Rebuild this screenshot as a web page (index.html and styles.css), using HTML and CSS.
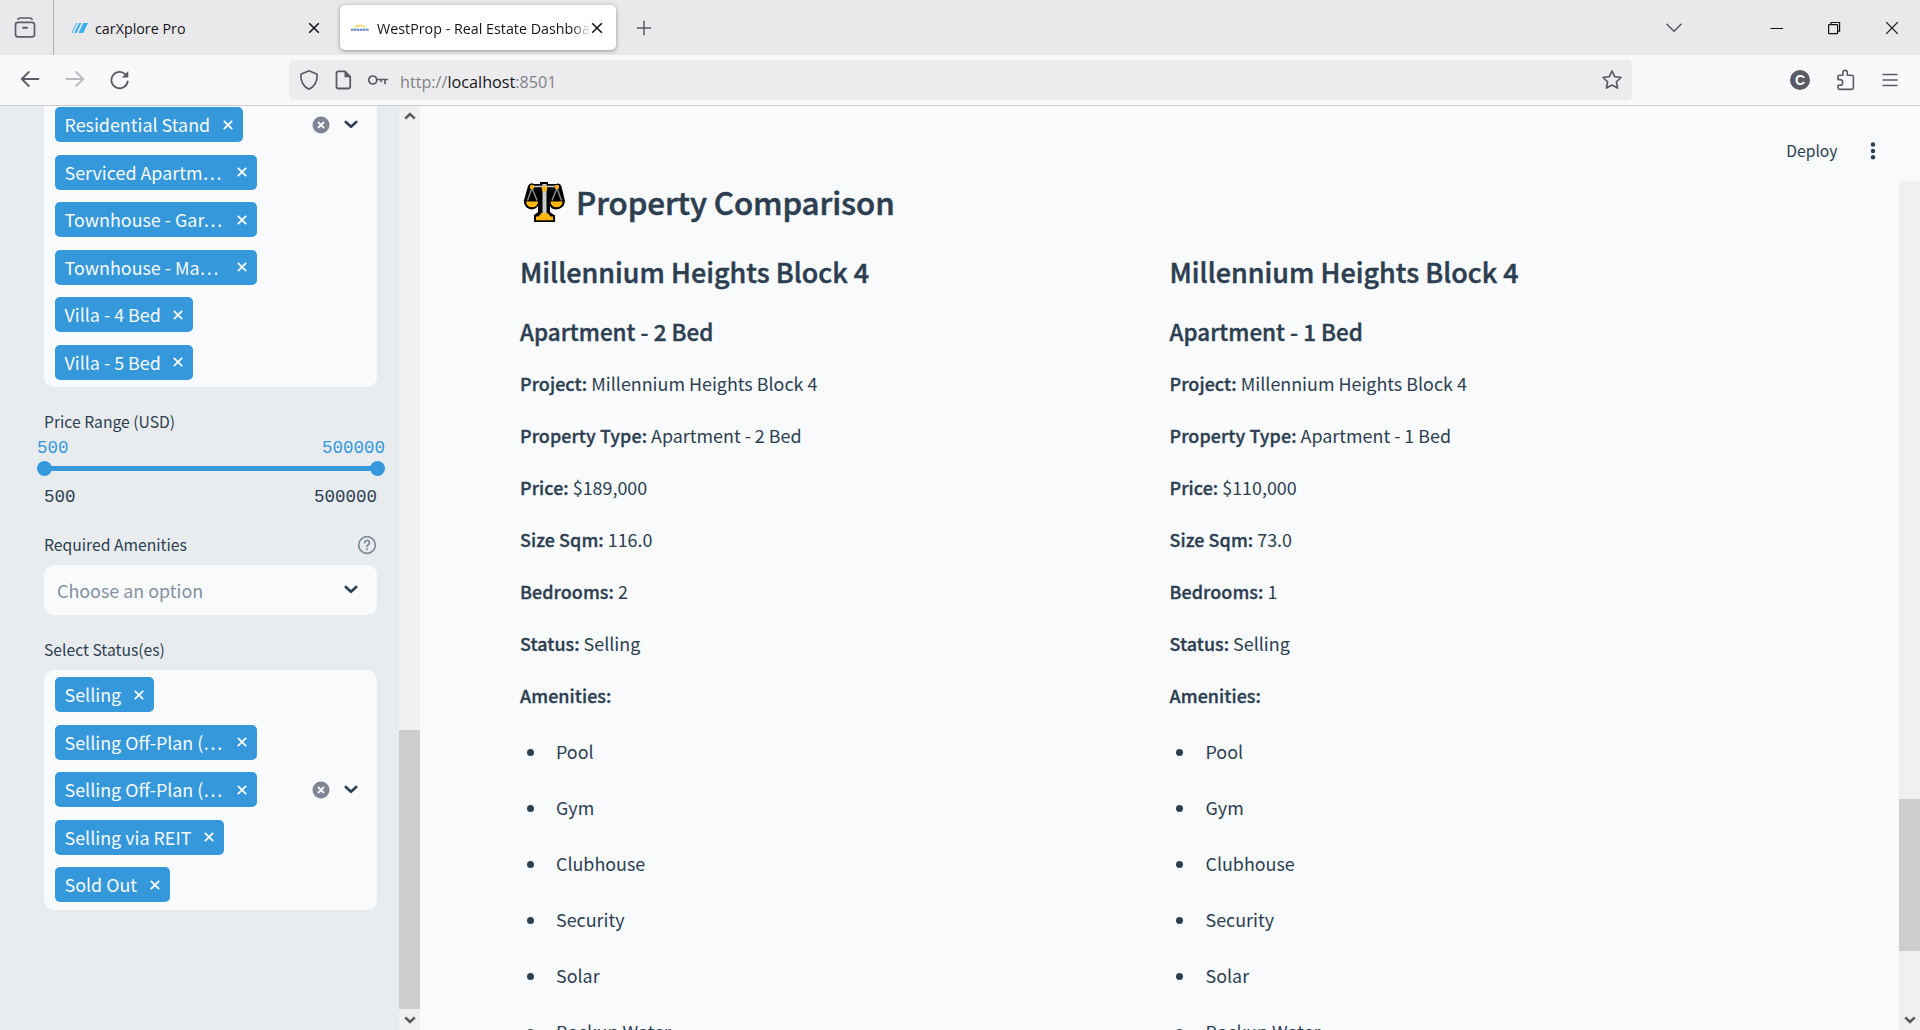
FILE: index.html
```html
<!DOCTYPE html>
<html lang="en">
<head>
<meta charset="utf-8">
<title>WestProp - Real Estate Dashboard</title>
<link rel="stylesheet" href="styles.css">
</head>
<body>
<svg width="0" height="0" class="defs">
  <symbol id="x" viewBox="0 0 12 12"><path d="M1.8 1.8 10.2 10.2M10.2 1.8 1.8 10.2" fill="none" stroke="currentColor" stroke-width="1.9"/></symbol>
  <symbol id="tabx" viewBox="0 0 12 12"><path d="M1.2 1.2 10.8 10.8M10.8 1.2 1.2 10.8" fill="none" stroke="currentColor" stroke-width="1.6"/></symbol>
  <symbol id="chev" viewBox="0 0 14 10"><path d="M1.8 2 7 6.8 12.2 2" fill="none" stroke="currentColor" stroke-width="2.6" stroke-linecap="round" stroke-linejoin="round"/></symbol>
  <symbol id="clear" viewBox="0 0 18 18"><circle cx="9" cy="9" r="8.5" fill="#808495"/><path d="M6 6 12 12M12 6 6 12" fill="none" stroke="#f8f9fb" stroke-width="1.8"/></symbol>
  <symbol id="arrow" viewBox="0 0 12 8"><path d="M1.2 1.4 6 6 10.8 1.4" fill="none" stroke="#5c5c5c" stroke-width="2.6"/></symbol>
</svg>

<header class="tabs">
  <div class="view"><svg width="22" height="22" viewBox="0 0 22 22" fill="none" stroke="#5b5b66" stroke-width="1.7" stroke-linecap="round"><path d="M4 2.2Q4.6 1 6 1H16Q17.4 1 18 2.2"/><rect x="1.5" y="5.3" width="19" height="14.6" rx="2.6"/><path d="M9 10.8H13" stroke-width="1.9"/></svg></div>
  <div class="tab">
    <svg class="fav" width="20" height="12" viewBox="0 0 20 12" fill="#3ab0ee"><path d="M6.200 1H7.200L2.500 11H1.500ZM9 1H11.300L6.600 11H4.300ZM13.200 1H18L13.300 11H8.500Z"/></svg>
    <span class="title">carXplore Pro</span>
    <svg class="close" width="12" height="12"><use href="#tabx"/></svg>
  </div>
  <div class="tab active">
    <svg class="fav" width="20" height="12" viewBox="0 0 20 12"><path d="M5 5.500Q6.500 3 8 4.200Q10 1.500 12 4.200Q13.500 3 15 5.500" fill="none" stroke="#f3cf62" stroke-width="1.400"/><path d="M1 7.800H19" stroke="#3f73bb" stroke-width="2" stroke-dasharray="2.400 .5" opacity=".85"/></svg>
    <span class="title fade">WestProp - Real Estate Dashboard</span>
    <svg class="close" width="12" height="12"><use href="#tabx"/></svg>
  </div>
  <svg class="plus" width="16" height="16" viewBox="0 0 16 16"><path d="M8 .8V15.200M.8 8H15.200" stroke="#5b5b66" stroke-width="1.500"/></svg>
  <div class="window">
    <svg width="16" height="10" viewBox="0 0 16 10" fill="none" stroke="#5b5b66" stroke-width="1.600" stroke-linecap="round" stroke-linejoin="round"><path d="M1 1.300 8 8.300 15 1.300"/></svg>
    <svg width="14" height="14" viewBox="0 0 14 14"><path d="M.5 7.500H13" stroke="#111" stroke-width="1"/></svg>
    <svg width="14" height="14" viewBox="0 0 14 14" fill="none" stroke="#111" stroke-width="1.200"><rect x="1.600" y="3.600" width="9" height="9" rx=".6"/><path d="M4 3.500V1.500H12.600V10.200H10.600"/></svg>
    <svg width="14" height="14" viewBox="0 0 14 14"><path d="M1.200 1.200 12.800 12.800M12.800 1.200 1.200 12.800" stroke="#111" stroke-width="1.200"/></svg>
  </div>
</header>

<nav class="toolbar">
  <div class="history">
    <svg width="20" height="18" viewBox="0 0 20 18" fill="none" stroke="#5b5b66" stroke-width="1.800" stroke-linecap="round" stroke-linejoin="round"><path d="M18.500 9H1.800M8.800 2 1.800 9 8.800 16"/></svg>
    <svg width="20" height="18" viewBox="0 0 20 18" fill="none" stroke="#b9b9be" stroke-width="1.800" stroke-linecap="round" stroke-linejoin="round"><path d="M1.500 9H18.200M11.200 2 18.200 9 11.200 16"/></svg>
    <svg width="20" height="20" viewBox="0 0 20 20" fill="none" stroke="#5b5b66" stroke-width="1.800" stroke-linecap="round"><path d="M17.700 11.500A8.200 8.200 0 1 1 15.500 4.300"/><path d="M18.300 1V7.500H11.800Z" fill="#5b5b66" stroke="none"/></svg>
  </div>
  <div class="urlbar">
    <svg width="20" height="22" viewBox="0 0 20 22" fill="none" stroke="#5b5b66" stroke-width="1.700" stroke-linejoin="round"><path d="M10 1.800 17.600 5Q18.200 5.300 18.200 6C18.200 12 16 17.500 10 20.200C4 17.500 1.800 12 1.800 6Q1.800 5.300 2.400 5Z"/></svg>
    <svg width="17" height="20" viewBox="0 0 17 20" fill="none" stroke="#5b5b66" stroke-width="1.800"><path d="M3.500 1.400H10L15.200 6.600V16.500Q15.200 18.500 13.200 18.500H3.500Q1.500 18.500 1.500 16.500V3.400Q1.500 1.400 3.500 1.400Z"/><path d="M9.500 1V7.200H15.700Z" fill="#5b5b66" stroke="none"/></svg>
    <svg width="22" height="14" viewBox="0 0 22 14" fill="none" stroke="#5b5b66" stroke-width="1.700" stroke-linecap="round"><circle cx="4.800" cy="7" r="4"/><path d="M9 6.500H19.500M17 6.500V10.500M13 6.500V8.500"/></svg>
    <span class="url">http://<b>localhost</b>:8501</span>
    <svg class="star" width="22" height="22" viewBox="0 0 22 22" fill="none" stroke="#5b5b66" stroke-width="1.700" stroke-linejoin="round"><path d="M11 2 13.700 7.700 20 8.500 15.400 12.800 16.600 19.100 11 16 5.400 19.100 6.600 12.800 2 8.500 8.300 7.700Z"/></svg>
  </div>
  <div class="tools">
    <span class="account">C</span>
    <svg width="20" height="22" viewBox="0 0 20 22" fill="none" stroke="#5b5b66" stroke-width="1.600" stroke-linejoin="round"><path d="M2 9V7.600Q2 6.200 3.400 6.200H6.900V3.600A2.200 2.200 0 0 1 11.300 3.600V6.200H15.600Q17.400 6.200 17.400 8V18.800Q17.400 20.400 15.800 20.400H3.600Q2 20.400 2 18.800V16.200H3.900A2.600 2.600 0 0 0 3.900 10.600H2Z"/></svg>
    <svg width="16" height="14" viewBox="0 0 16 14"><path d="M1 1.500H15M1 7H15M1 12.500H15" stroke="#5b5b66" stroke-width="1.500" stroke-linecap="round"/></svg>
  </div>
</nav>

<div class="page">
  <aside class="sidebar">
    <div class="field types">
      <div class="tags">
        <span class="tag w188">Residential Stand<svg><use href="#x"/></svg></span>
        <span class="tag w202">Serviced Apartm…<svg><use href="#x"/></svg></span>
        <span class="tag w202">Townhouse - Gar…<svg><use href="#x"/></svg></span>
        <span class="tag w202">Townhouse - Ma…<svg><use href="#x"/></svg></span>
        <span class="tag w138">Villa - 4 Bed<svg><use href="#x"/></svg></span>
        <span class="tag w138">Villa - 5 Bed<svg><use href="#x"/></svg></span>
      </div>
      <div class="controls"><svg width="18" height="18"><use href="#clear"/></svg><svg width="14" height="10"><use href="#chev"/></svg></div>
    </div>

    <div class="label price">Price Range (USD)</div>
    <div class="values current"><span>500</span><span>500000</span></div>
    <div class="slider"><i></i><i></i></div>
    <div class="values bounds"><span>500</span><span>500000</span></div>

    <div class="label amenities">Required Amenities
      <svg width="20" height="20" viewBox="0 0 20 20" fill="none" stroke="#7f8b98" stroke-width="1.700" stroke-linecap="round"><circle cx="10" cy="10" r="8.300"/><path d="M7.700 7.900A2.350 2.350 0 1 1 10.900 10Q10 10.400 10 11.400"/><path d="M10 14.200V14.300" stroke-width="2"/></svg>
    </div>
    <div class="field select"><span>Choose an option</span><div class="controls"><svg width="14" height="10"><use href="#chev"/></svg></div></div>

    <div class="label status">Select Status(es)</div>
    <div class="field statuses">
      <div class="tags">
        <span class="tag w99">Selling<svg><use href="#x"/></svg></span>
        <span class="tag w202">Selling Off-Plan (…<svg><use href="#x"/></svg></span>
        <span class="tag w202">Selling Off-Plan (…<svg><use href="#x"/></svg></span>
        <span class="tag w169">Selling via REIT<svg><use href="#x"/></svg></span>
        <span class="tag w115">Sold Out<svg><use href="#x"/></svg></span>
      </div>
      <div class="controls"><svg width="18" height="18"><use href="#clear"/></svg><svg width="14" height="10"><use href="#chev"/></svg></div>
    </div>
  </aside>
  <div class="scrollbar side">
    <svg class="up" width="12" height="8"><use href="#arrow"/></svg>
    <div class="thumb"></div>
    <svg width="12" height="8"><use href="#arrow"/></svg>
  </div>

  <main>
    <h2><svg width="42" height="42" viewBox="0 0 42 42"><path d="M17 1H25V3H33Q37 1 38.500 5.500L42 20Q41 28 33 28.500Q28 28 27 25V31L31 34H32V41H11V34L15 31V25Q13 28 8.500 28.500Q1 27 .8 20L5 5Q7 1 11 3H17Z" fill="#000"/><path d="M9 5.500H34" stroke="#c9c9c9" stroke-width="1.600"/><path d="M9 7 4.500 19.500M9 7 14 19.500M34 7 29 19.500M34 7 38.500 19.500" stroke="#8a8a8a" stroke-width="1.500"/><rect x="19.500" y="3" width="4" height="30" fill="#c9c9c9"/><path d="M3 20.500H15.200Q14.500 26.300 9 26.300Q3.600 26.300 3 20.500ZM27.500 20.500H39.700Q39 26.300 33.600 26.300Q28.200 26.300 27.500 20.500ZM13 39.200V35.500H15.500L18.500 32H24.500L27.500 35.500H30V39.200Z" fill="#ffb70f"/><circle cx="9" cy="6" r="2.200" fill="#ffb70f"/><circle cx="34" cy="6" r="2.200" fill="#ffb70f"/><circle cx="21.500" cy="7.800" r="2.800" fill="#ffb70f"/></svg>Property Comparison</h2>
    <div class="columns">
      <section>
        <h3>Millennium Heights Block 4</h3>
        <h4>Apartment - 2 Bed</h4>
        <p><b>Project:</b> Millennium Heights Block 4</p>
        <p><b>Property Type:</b> Apartment - 2 Bed</p>
        <p><b>Price:</b> $189,000</p>
        <p><b>Size Sqm:</b> 116.0</p>
        <p><b>Bedrooms:</b> 2</p>
        <p><b>Status:</b> Selling</p>
        <p><b>Amenities:</b></p>
        <ul><li>Pool</li><li>Gym</li><li>Clubhouse</li><li>Security</li><li>Solar</li><li>Backup Water</li></ul>
      </section>
      <section>
        <h3>Millennium Heights Block 4</h3>
        <h4>Apartment - 1 Bed</h4>
        <p><b>Project:</b> Millennium Heights Block 4</p>
        <p><b>Property Type:</b> Apartment - 1 Bed</p>
        <p><b>Price:</b> $110,000</p>
        <p><b>Size Sqm:</b> 73.0</p>
        <p><b>Bedrooms:</b> 1</p>
        <p><b>Status:</b> Selling</p>
        <p><b>Amenities:</b></p>
        <ul><li>Pool</li><li>Gym</li><li>Clubhouse</li><li>Security</li><li>Solar</li><li>Backup Water</li></ul>
      </section>
    </div>
  </main>
  <div class="scrollbar content">
    <div class="thumb"></div>
    <svg width="12" height="8"><use href="#arrow"/></svg>
  </div>
  <div class="deploy">Deploy<svg width="6" height="20" viewBox="0 0 6 20" fill="#2c3e50"><circle cx="3" cy="3.500" r="2.200"/><circle cx="3" cy="10" r="2.200"/><circle cx="3" cy="16.300" r="2.200"/></svg></div>
</div>
</body>
</html>
```
FILE: styles.css
```css
* { box-sizing: border-box; }
body {
  margin: 0;
  width: 1920px;
  height: 1030px;
  overflow: hidden;
  display: flex;
  flex-direction: column;
  background: #f8fafc;
  color: #2c3e50;
  font: 17.9px "Noto Sans CJK SC", sans-serif;
}
svg { display: block; flex: none; }
.defs { position: absolute; }
h2, h3, h4, p, ul { margin: 0; padding: 0; }

/* Browser tab strip */
.tabs {
  height: 55px;
  flex: none;
  display: flex;
  align-items: center;
  background: #e9e9eb;
  color: #15141a;
  font: 14.3px "Open Sans", sans-serif;
}
.view { width: 54px; height: 55px; padding: 17px 0 0 14px; border-right: 1px solid #aeaeb2; }
.tab { display: flex; align-items: center; height: 45px; width: 276px; padding: 0 10px; }
.tab:not(.active) { margin: 0 4px 0 6px; }
.tab .fav { margin-right: 5px; }
.tab.active .fav { margin-right: 7px; }
.tab.active { background: #fff; border-radius: 5px; box-shadow: 0 1px 4px rgba(0, 0, 0, .38); }
.title { flex: 1; overflow: hidden; white-space: nowrap; padding-top: 1px; }
.fade { mask-image: linear-gradient(to left, transparent, #000 20px); }
.tab .close { margin-right: 6px; }
.tab.active .close { margin-left: 0; margin-right: 3px; }
.plus { margin-left: 20px; }
.window { margin-left: auto; display: flex; align-items: center; padding-right: 21px; }
.window svg { margin-right: 44px; }
.window svg:first-child { margin-right: 88px; }
.window svg:nth-child(2) { margin-right: 43px; }
.window svg:last-child { margin-right: 0; }

/* Browser toolbar */
.toolbar {
  height: 51px;
  flex: none;
  display: flex;
  align-items: center;
  background: #f9f9fb;
  border-bottom: 1px solid #ccccd0;
}
.history { width: 289px; display: flex; gap: 25px; padding-left: 20px; }
.urlbar {
  width: 1343px;
  height: 40px;
  display: flex;
  align-items: center;
  padding: 0 9px 0 10px;
  border-radius: 5px;
  background: #ececee;
  color: #828287;
  font: 16.2px "Open Sans", sans-serif;
}
.urlbar svg + svg { margin-left: 16px; }
.url { margin: 3px 0 0 10px; }
.url b { color: #15141a; font-weight: 400; }
.urlbar .star { margin-left: auto; }
.tools { flex: 1; display: flex; align-items: center; padding: 0 22px 0 158px; justify-content: space-between; }
.account {
  width: 20px;
  height: 20px;
  border-radius: 50%;
  background: #5b5b66;
  color: #fff;
  font: 700 14px/20px "Liberation Sans", sans-serif;
  text-align: center;
}

/* Sidebar */
.page { flex: 1; min-height: 0; display: flex; position: relative; }
.sidebar { width: 399px; padding: 0 22px 0 44px; background: #e8ecef; }
.field { display: flex; justify-content: space-between; background: #f8fafc; border-radius: 10px; }
.types { height: 281px; padding: 1px 19px 0 11px; border-radius: 0 0 10px 10px; }
.statuses { height: 240px; padding: 7px 19px 0 11px; }
.tags { display: flex; flex-direction: column; gap: 12.5px; }
.tag {
  height: 35px;
  display: flex;
  align-items: center;
  justify-content: space-between;
  padding: 0 9.5px;
  border-radius: 5px;
  background: #3498db;
  color: #f8fafc;
  line-height: 35px;
  white-space: nowrap;
}
.tag svg { width: 12px; height: 12px; }
.w188 { width: 188px; }
.w202 { width: 202px; }
.w138 { width: 138px; }
.w99 { width: 99px; }
.w169 { width: 169px; }
.w115 { width: 115px; }
.controls { display: flex; align-items: center; gap: 14.5px; }
.types .controls { height: 36px; }
.statuses .controls { height: 225px; }
.label { height: 24px; display: flex; align-items: center; justify-content: space-between; font-size: 15.7px; line-height: 24px; }
.label.price { margin-top: 23px; }
.label.amenities { margin-top: 25px; }
.label.status { margin-top: 23px; margin-bottom: 8px; }
.values { display: flex; justify-content: space-between; font: 17.5px/22px "Liberation Mono", monospace; }
.current { margin: 3px -8px 0 -7px; color: #3498db; }
.slider {
  height: 5px;
  margin: 7px 0 15px;
  display: flex;
  align-items: center;
  justify-content: space-between;
  background: #3498db;
}
.slider i { width: 15px; height: 15px; margin: 0 -7.5px; border-radius: 50%; background: #3498db; }
.select { height: 50px; margin-top: 8px; padding: 0 19px 0 13px; line-height: 50px; color: #8590a0; }
.select .controls { color: #2c3e50; }

/* Scrollbars */
.scrollbar { width: 21px; display: flex; flex-direction: column; align-items: center; background: #f0f0f0; }
.scrollbar .thumb { width: 21px; background: #cdcdcd; }
.side .up { margin: 6px 0 610px; transform: scaleY(-1); }
.side .thumb { height: 279px; margin-bottom: 7px; }
.content { margin-top: 75px; }
.content .thumb { height: 152px; margin: 618px 0 65px; }

/* Comparison */
main { flex: 1; padding: 66px 100px 0; overflow: hidden; }
h2, h3, h4, b { font-weight: 500; -webkit-text-stroke: .018em #2c3e50; }
.url b { -webkit-text-stroke: 0; }
h2 { height: 60px; display: flex; align-items: center; gap: 11px; padding-left: 3px; font-size: 31.3px; line-height: 60px; letter-spacing: -.1px; }
.columns { display: grid; grid-template-columns: 1fr 1fr; gap: 20px; }
h3 { margin: 11px 0 4px; font-size: 26.9px; line-height: 58px; letter-spacing: .03px; }
h4 { font-size: 22.4px; line-height: 52px; letter-spacing: .03px; }
p { line-height: 52px; }
p b { letter-spacing: .07px; }
ul { margin-top: 2px; padding-left: 36px; list-style: none; }
li { position: relative; line-height: 56px; }
li::before { content: ""; position: absolute; left: -29.5px; top: 26px; width: 7px; height: 7px; border-radius: 50%; background: #2c3e50; }
.deploy {
  position: absolute;
  top: 33px;
  right: 44.5px;
  display: flex;
  align-items: center;
  gap: 32px;
  font-size: 15.7px;
  line-height: 24px;
}
```
